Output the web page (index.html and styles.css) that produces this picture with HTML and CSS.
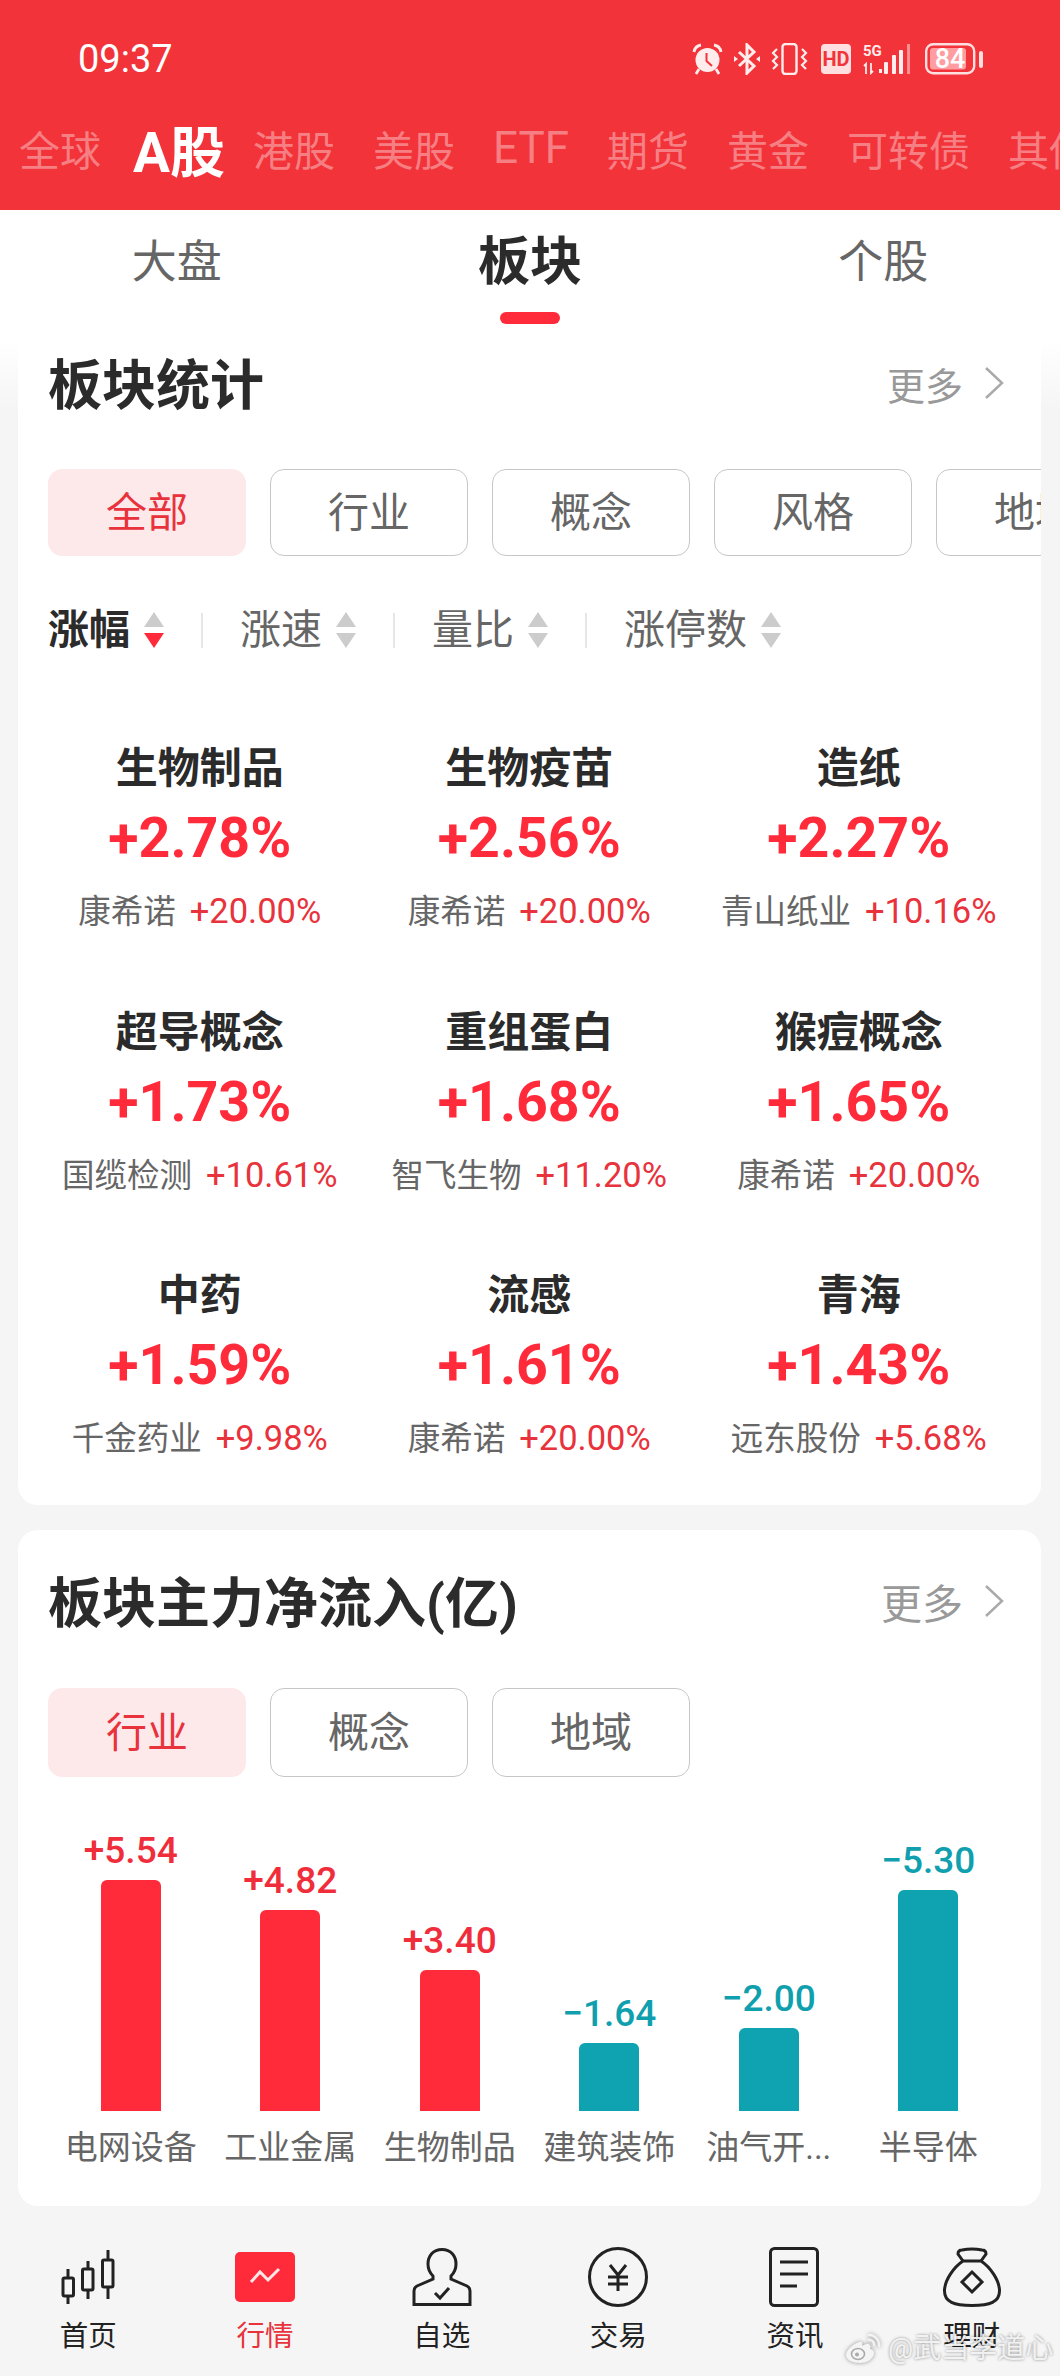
FILE: index.html
```html
<!DOCTYPE html>
<html lang="zh">
<head>
	<meta charset="utf-8">
	<title>行情 - 板块</title>
	<link rel="stylesheet" href="styles.css">
</head>
<body>

	<!-- red top: phone status bar + market tabs -->
	<header class="top">
		<div class="status">
			<span class="time">09:37</span>
			<div class="status-icons">
				<svg width="31" height="32" viewBox="0 0 31 32">
					<circle cx="15.5" cy="17" r="12" fill="#ffecec"/>
					<path d="M2 9Q3 3 9 2M22 2Q28 3 29 9M7 26L4 31M24 26L27 31" fill="none" stroke="#ffecec" stroke-width="2.8"/>
					<path d="M14.5 10V18L20 23" fill="none" stroke="#f23339" stroke-width="2"/>
				</svg>
				<svg width="26" height="32" viewBox="0 0 26 32">
					<path d="M5 9L20 23L13 30V2L20 9L5 23" fill="none" stroke="#ffecec" stroke-width="3"/>
					<path d="M0 13L4 16L0 19ZM26 13L22 16L26 19Z" fill="#ffecec"/>
				</svg>
				<svg width="37" height="32" viewBox="0 0 37 32">
					<rect x="11.5" y="1" width="14" height="30" rx="3" fill="none" stroke="#ffecec" stroke-width="2.4"/>
					<path d="M6 6L2 10L6 14L2 18L6 22L2 26M31 6L35 10L31 14L35 18L31 22L35 26" fill="none" stroke="#ffecec" stroke-width="2.2"/>
				</svg>
				<svg width="33" height="32" viewBox="0 0 33 32">
					<rect x="2" y="1" width="30" height="30" rx="4" fill="#ffdfe0"/>
					<text x="17" y="23" class="hd-text">HD</text>
				</svg>
				<svg width="48" height="32" viewBox="0 0 48 32">
					<text x="0" y="13" class="fiveg-text">5G</text>
					<path d="M3 31V21L1 23M8 20V30L10 28" fill="none" stroke="#ffecec" stroke-width="1.8"/>
					<rect x="16" y="26" width="3" height="4" fill="#ffecec"/>
					<rect x="21" y="19" width="4" height="12" rx="1" fill="#ffecec"/>
					<rect x="29" y="12" width="4" height="19" rx="1" fill="#ffecec"/>
					<rect x="36" y="7" width="4" height="24" rx="1" fill="#ffecec"/>
					<rect x="44" y="1" width="3" height="30" fill="#ff8e92"/>
				</svg>
				<svg width="61" height="32" viewBox="0 0 61 32">
					<rect x="4.2" y="1.2" width="48" height="29" rx="7" fill="none" stroke="#ffdfe0" stroke-width="2.4"/>
					<rect x="8" y="5" width="36" height="21.5" rx="3" fill="#ff9da0"/>
					<rect x="57" y="8" width="4" height="17" rx="2" fill="#ffdfe0"/>
					<text x="28" y="25" class="batt-text">84</text>
				</svg>
			</div>
		</div>
		<nav class="markets">
			<span>全球</span>
			<span class="on">A股</span>
			<span>港股</span>
			<span>美股</span>
			<span class="etf">ETF</span>
			<span>期货</span>
			<span>黄金</span>
			<span>可转债</span>
			<span>其他</span>
		</nav>
	</header>

	<div class="subtabs">
		<div class="subtab">大盘</div>
		<div class="subtab on">板块<i class="underline"></i></div>
		<div class="subtab">个股</div>
	</div>

	<main class="content">

		<section class="card card-stats">
			<div class="card-head">
				<h2>板块统计</h2>
				<a class="more">更多<svg width="22" height="34" viewBox="0 0 22 34"><path d="M3 2L19 17L3 32" fill="none" stroke="#aaa" stroke-width="2.5"/></svg></a>
			</div>
			<div class="chips">
				<span class="chip on">全部</span>
				<span class="chip">行业</span>
				<span class="chip">概念</span>
				<span class="chip">风格</span>
				<span class="chip">地域</span>
			</div>
			<div class="sorts">
				<span class="sort on">涨幅<i class="arrows"><b></b><b class="red"></b></i></span>
				<i class="sep"></i>
				<span class="sort">涨速<i class="arrows"><b></b><b></b></i></span>
				<i class="sep"></i>
				<span class="sort">量比<i class="arrows"><b></b><b></b></i></span>
				<i class="sep"></i>
				<span class="sort">涨停数<i class="arrows"><b></b><b></b></i></span>
			</div>
			<div class="sector-grid">
				<div class="sector">
					<div class="name">生物制品</div>
					<div class="pct">+2.78%</div>
					<div class="lead">康希诺<em>+20.00%</em></div>
				</div>
				<div class="sector">
					<div class="name">生物疫苗</div>
					<div class="pct">+2.56%</div>
					<div class="lead">康希诺<em>+20.00%</em></div>
				</div>
				<div class="sector">
					<div class="name">造纸</div>
					<div class="pct">+2.27%</div>
					<div class="lead">青山纸业<em>+10.16%</em></div>
				</div>
				<div class="sector">
					<div class="name">超导概念</div>
					<div class="pct">+1.73%</div>
					<div class="lead">国缆检测<em>+10.61%</em></div>
				</div>
				<div class="sector">
					<div class="name">重组蛋白</div>
					<div class="pct">+1.68%</div>
					<div class="lead">智飞生物<em>+11.20%</em></div>
				</div>
				<div class="sector">
					<div class="name">猴痘概念</div>
					<div class="pct">+1.65%</div>
					<div class="lead">康希诺<em>+20.00%</em></div>
				</div>
				<div class="sector">
					<div class="name">中药</div>
					<div class="pct">+1.59%</div>
					<div class="lead">千金药业<em>+9.98%</em></div>
				</div>
				<div class="sector">
					<div class="name">流感</div>
					<div class="pct">+1.61%</div>
					<div class="lead">康希诺<em>+20.00%</em></div>
				</div>
				<div class="sector">
					<div class="name">青海</div>
					<div class="pct">+1.43%</div>
					<div class="lead">远东股份<em>+5.68%</em></div>
				</div>
			</div>
		</section>

		<section class="card card-flow">
			<div class="card-head">
				<h2>板块主力净流入(亿)</h2>
				<a class="more more-big">更多<svg width="22" height="34" viewBox="0 0 22 34"><path d="M3 2L19 17L3 32" fill="none" stroke="#aaa" stroke-width="2.5"/></svg></a>
			</div>
			<div class="chips chips-tall">
				<span class="chip on">行业</span>
				<span class="chip">概念</span>
				<span class="chip">地域</span>
			</div>
			<div class="chart">
				<div class="col up">
					<div class="val">+5.54</div>
					<div class="bar" style="height:231px"></div>
					<div class="label">电网设备</div>
				</div>
				<div class="col up">
					<div class="val">+4.82</div>
					<div class="bar" style="height:201px"></div>
					<div class="label">工业金属</div>
				</div>
				<div class="col up">
					<div class="val">+3.40</div>
					<div class="bar" style="height:141px"></div>
					<div class="label">生物制品</div>
				</div>
				<div class="col down">
					<div class="val">−1.64</div>
					<div class="bar" style="height:68px"></div>
					<div class="label">建筑装饰</div>
				</div>
				<div class="col down">
					<div class="val">−2.00</div>
					<div class="bar" style="height:83px"></div>
					<div class="label">油气开...</div>
				</div>
				<div class="col down">
					<div class="val">−5.30</div>
					<div class="bar" style="height:221px"></div>
					<div class="label">半导体</div>
				</div>
			</div>
		</section>
	</main>

	<!-- bottom nav -->
	<footer class="tabbar">
		<div class="tab">
			<svg class="ico" width="60" height="60" viewBox="0 0 60 60">
				<rect x="5" y="31" width="10.5" height="18" rx="1.5"/>
				<rect x="24.5" y="22" width="10.5" height="21" rx="1.5"/>
				<rect x="44.5" y="13" width="10.5" height="27" rx="1.5"/>
				<path d="M10 22V31M10 49V57M30 14V22M30 43V52M50 3V13M50 40V52"/>
			</svg>
			首页
		</div>
		<div class="tab on">
			<svg width="60" height="60" viewBox="0 0 60 60">
				<rect y="5" width="60" height="50" rx="5" fill="#ff2a3a"/>
				<path d="M16 35L25 25L33 33L44 22" fill="none" stroke="#ffe6e6" stroke-width="3"/>
			</svg>
			行情
		</div>
		<div class="tab">
			<svg class="ico" width="60" height="60" viewBox="0 0 60 60">
				<path d="M30 2.5C21 2.5 16 9 16 17C16 22 18 26 21 29V32L5 39Q2 40.5 2 44V57.5H58V44Q58 40.5 55 39L39 32V29C42 26 44 22 44 17C44 9 39 2.5 30 2.5Z"/>
				<path d="M23 46L28 51L37 41"/>
			</svg>
			自选
		</div>
		<div class="tab">
			<svg class="ico" width="60" height="60" viewBox="0 0 60 60">
				<circle cx="30" cy="30" r="28.5"/>
				<path d="M22 18L30 28L38 18M20 30H40M20 37H40M30 28V44"/>
			</svg>
			交易
		</div>
		<div class="tab">
			<svg class="ico" width="60" height="60" viewBox="0 0 60 60">
				<rect x="5.5" y="1.5" width="47" height="57" rx="4"/>
				<path d="M15 15H43M15 27H43M15 39H32"/>
			</svg>
			资讯
		</div>
		<div class="tab">
			<svg class="ico" width="60" height="60" viewBox="0 0 60 60">
				<path d="M21 14C12 20 2.5 33 2.5 44C2.5 55 12 58.5 30 58.5C48 58.5 57.5 55 57.5 44C57.5 33 48 20 39 14Z"/>
				<path d="M21 14L16 7Q16 3 20 3Q30 1 40 3Q44 3 44 7L39 14"/>
				<path d="M30 25L40 35L30 45L20 35Z"/>
			</svg>
			理财
		</div>
	</footer>

	<!-- weibo watermark sits over the nav -->
	<div class="watermark">
		<svg width="36" height="30" viewBox="0 0 36 30">
			<path d="M14 8C6 11 1 17 1 21C1 26 8 29 15 29C23 29 29 24 29 19C29 16 26 15 25 15C26 12 25 10 22 10C20 10 18 11 17 12C18 9 17 7 14 8Z" fill="#f4f4f4"/>
			<ellipse cx="13" cy="20" rx="6.5" ry="5.5" fill="none" stroke="#aaa" stroke-width="1.6"/>
			<circle cx="12" cy="20.5" r="2" fill="#aaa"/>
			<path d="M23 1C29 0 35 6 34 13M23 6C26 5 30 8 29 12" fill="none" stroke="#f4f4f4" stroke-width="2.2"/>
		</svg>
		<span>@武当李道心</span>
	</div>

</body>
</html>
```
FILE: styles.css
```css
* {
	box-sizing: border-box;
}

body {
	margin: 0;
	width: 1060px;
	height: 2376px;
	overflow: hidden;
	position: relative;
	background: #f5f5f5;
	color: #222;
	font-family: Roboto, "Noto Sans CJK SC", sans-serif;
}

/* top red part */
.top {
	height: 210px;
	padding-top: 43px;
	background: #f23339;
	color: #fff;
}

.status {
	display: flex;
	justify-content: space-between;
	align-items: center;
	height: 32px;
	padding: 0 77px 0 78px;
}

.time {
	font-size: 38px;
}

.status-icons {
	display: flex;
	gap: 11px;
}

.hd-text {
	font: 700 20px Roboto, sans-serif;
	fill: #f23339;
	text-anchor: middle;
}

.fiveg-text {
	font: 700 15px Roboto, sans-serif;
	fill: #ffecec;
}

.batt-text {
	font: 500 27px Roboto, sans-serif;
	fill: #fff;
	text-anchor: middle;
}

.markets {
	display: flex;
	align-items: center;
	gap: 38px;
	height: 60px;
	margin-top: 43px;
	padding-left: 19px;
	overflow: hidden;
	white-space: nowrap;
	font-size: 41px;
	color: rgba(255, 255, 255, 0.38);
}

.markets span {
	flex: none;
}

.markets .on {
	margin: 0 -10px 0 -6px;
	font-size: 55px;
	font-weight: 700;
	color: #fff;
}

.markets .etf {
	font-size: 44px;
}

/* 大盘 板块 个股 */
.subtabs {
	display: flex;
	height: 130px;
	padding-top: 23px;
	background: #fff;
}

.subtab {
	flex: 1;
	text-align: center;
	font-size: 45px;
	line-height: 60px;
	color: #666;
}

.subtab.on {
	font-size: 52px;
	font-weight: 700;
	color: #2b2b2b;
}

.underline {
	display: block;
	width: 60px;
	height: 12px;
	margin: 19px auto 0;
	border-radius: 6px;
	background: #ff2a3a;
}

.content {
	height: 1866px;
	padding: 0 19px 0 18px;
	background: linear-gradient(#fff, #f5f5f5 70px);
}

.card {
	overflow: hidden;
	background: #fff;
	border-radius: 20px;
}

.card-stats {
	height: 1165px;
	padding-top: 17px;
	border-radius: 0 0 20px 20px;
}

.card-flow {
	height: 676px;
	margin-top: 25px;
	padding-top: 45px;
}

.card-head {
	display: flex;
	justify-content: space-between;
	align-items: center;
	height: 60px;
	padding: 0 36px 0 30px;
}

.card-head h2 {
	margin: 0;
	font-size: 54px;
	line-height: 60px;
	font-weight: 700;
	color: #2b2b2b;
}

.more {
	display: flex;
	align-items: center;
	gap: 20px;
	margin-bottom: 8px;
	font-size: 38px;
	color: #999;
}

.more-big {
	font-size: 41px;
}

.chips {
	display: flex;
	gap: 24px;
	margin-top: 52px;
	padding-left: 30px;
}

.chip {
	flex: none;
	width: 198px;
	height: 87px;
	border: 1px solid #c6c6c6;
	border-radius: 14px;
	font-size: 41px;
	line-height: 86px;
	text-align: center;
	color: #666;
}

.chip.on {
	border-color: #fde8ea;
	background: #fde8ea;
	color: #e8323c;
}

.chips-tall {
	margin-top: 53px;
}

.chips-tall .chip {
	height: 89px;
	line-height: 88px;
}

/* 涨幅 涨速 ... */
.sorts {
	display: flex;
	align-items: center;
	gap: 37px;
	height: 40px;
	margin-top: 54px;
	padding-left: 30px;
}

.sort {
	display: flex;
	align-items: center;
	gap: 14px;
	font-size: 41px;
	line-height: 40px;
	color: #666;
}

.sort.on {
	font-weight: 700;
	color: #2b2b2b;
}

.sep {
	width: 2px;
	height: 35px;
	background: #e6e6e6;
}

.arrows {
	display: flex;
	flex-direction: column;
	gap: 6px;
}

.arrows b {
	width: 0;
	height: 0;
	border-left: 10px solid transparent;
	border-right: 10px solid transparent;
	border-bottom: 15px solid #ccc;
}

.arrows b:last-child {
	border-bottom: 0;
	border-top: 15px solid #ccc;
}

.arrows b.red {
	border-top-color: #ff2a3a;
}

.sector-grid {
	display: grid;
	grid-template-columns: repeat(3, 329.5px);
	grid-auto-rows: 188px;
	row-gap: 75.5px;
	margin: 94px 0 0 17px;
}

.sector {
	text-align: center;
}

.sector .name {
	font-size: 42px;
	line-height: 50px;
	font-weight: 700;
	color: #2b2b2b;
}

.sector .pct {
	margin-top: 15px;
	font-size: 55.5px;
	line-height: 60px;
	font-weight: 700;
	color: #ff2a3a;
}

.sector .lead {
	margin-top: 22px;
	font-size: 32.5px;
	line-height: 40px;
	color: #666;
}

.sector .lead em {
	margin-left: 14px;
	font-style: normal;
	font-size: 34.5px;
	color: #e8323c;
}

/* net inflow bars */
.chart {
	display: grid;
	grid-template-columns: repeat(6, 159.5px);
	align-items: end;
	margin: 53px 0 0 33px;
}

.col {
	text-align: center;
}

.val {
	margin-bottom: 10px;
	font-size: 37px;
	line-height: 40px;
	font-weight: 500;
	position: relative;
	top: 1px;
}

.bar {
	width: 60px;
	margin: 0 auto;
	border-radius: 6px 6px 0 0;
}

.col.up .val {
	color: #f02d3a;
}

.col.up .bar {
	background: #ff2a3a;
}

.col.down .val {
	color: #0f9fae;
}

.col.down .bar {
	background: #0fa3b1;
}

.label {
	margin-top: 17px;
	font-size: 33px;
	line-height: 40px;
	white-space: nowrap;
	color: #666;
}

/* bottom nav */
.tabbar {
	display: grid;
	grid-template-columns: repeat(6, 1fr);
	position: absolute;
	left: 0;
	right: 0;
	top: 2247px;
}

.tab {
	display: flex;
	flex-direction: column;
	align-items: center;
	gap: 12px;
	font-size: 28.5px;
	line-height: 36px;
	color: #222;
}

.tab.on {
	color: #e8323c;
}

.ico {
	overflow: visible;
	fill: none;
	stroke: #222;
	stroke-width: 3;
}

.watermark {
	display: flex;
	align-items: center;
	gap: 7px;
	position: absolute;
	left: 845px;
	top: 2333px;
	font-size: 28px;
	line-height: 32px;
	color: rgba(248, 248, 248, 0.92);
	text-shadow: 0 0 3px rgba(0, 0, 0, 0.45);
}

.watermark svg {
	filter: drop-shadow(0 0 2px rgba(0, 0, 0, 0.4));
}
```
